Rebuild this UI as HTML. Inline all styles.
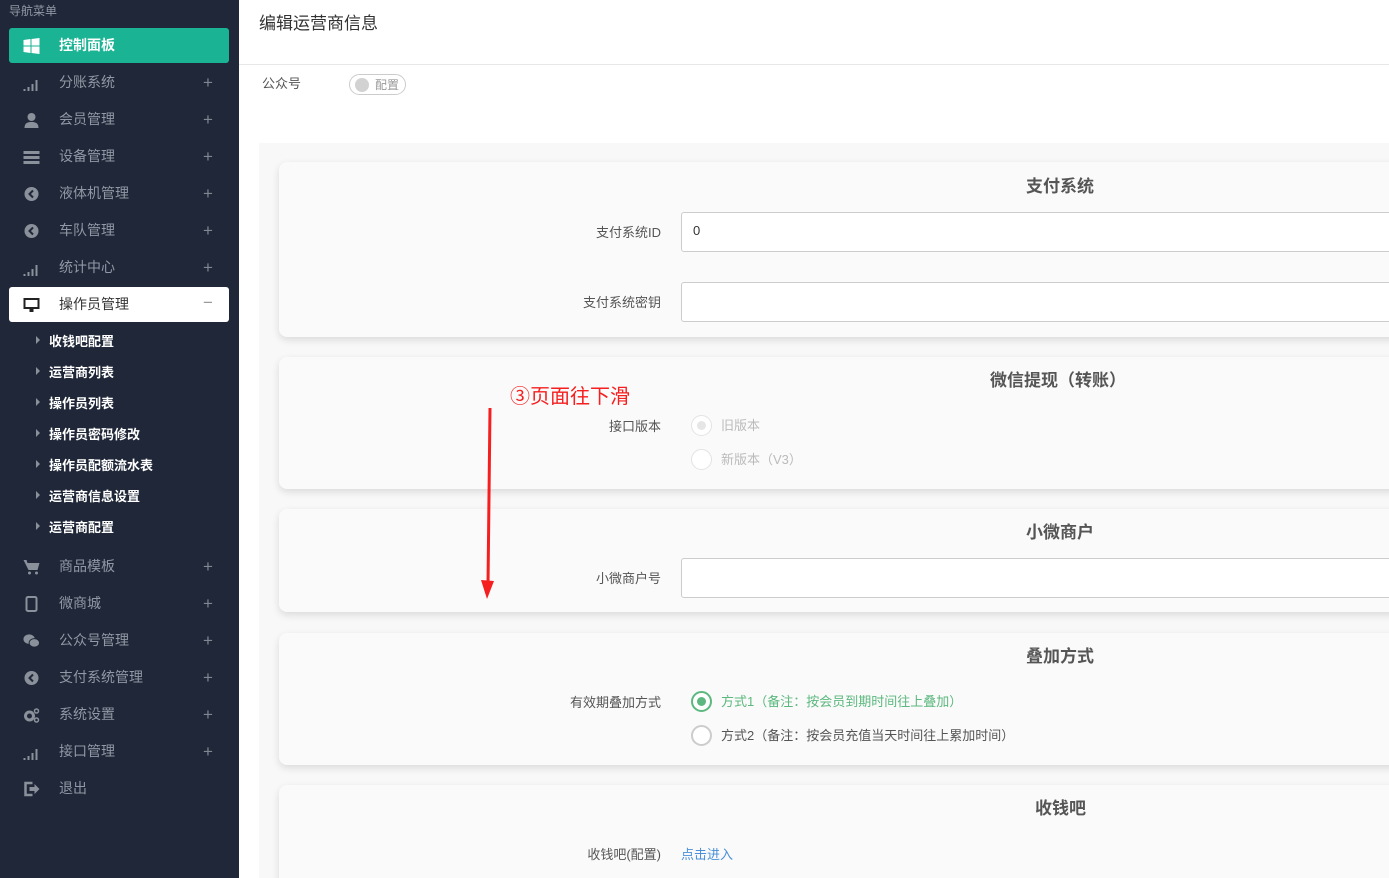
<!DOCTYPE html>
<html><head><meta charset="utf-8"><style>
*{margin:0;padding:0;box-sizing:border-box}
html,body{width:1389px;height:878px;overflow:hidden}
body{position:relative;background:#fff;font-family:"Liberation Sans","Noto Sans CJK SC",sans-serif;font-size:13px;color:#555}
.sb{position:absolute;left:0;top:0;width:239px;height:878px;background:#1f2738}
.abs{position:absolute}
.nav{position:absolute;left:9px;width:220px;height:36px;color:#9099a5;font-size:14px}
.nav .t{position:absolute;left:50px;top:7px}
.nav .p{position:absolute;left:194px;top:8px;font-size:17px;color:#7f8792}
.nav .ic{position:absolute;left:14px;top:10px;width:17px;height:16px}
.sub{position:absolute;left:49px;color:#fff;font-size:13px;font-weight:bold}
.sub:before{content:"";position:absolute;left:-13px;top:5px;border-left:4px solid #8a919b;border-top:4px solid transparent;border-bottom:4px solid transparent}
.card{position:absolute;left:279px;width:1600px;background:#fafafa;border-radius:8px;box-shadow:0 3px 8px rgba(0,0,0,.12)}
.ttl{position:absolute;left:1026px;font-size:17px;font-weight:bold;color:#555}
.lbl{position:absolute;width:200px;left:461px;text-align:right;font-size:13px;color:#555}
.inp{position:absolute;left:681px;width:720px;height:40px;background:#fff;border:1px solid #ccc;border-radius:3px}
.rad{position:absolute;left:691px;width:21px;height:21px;border-radius:50%;border:1px solid #ccc;background:#fff}
</style></head><body>
<div class="sb">
<div class="abs" style="left:9px;top:2px;color:#9099a5;font-size:12px">导航菜单</div>
<div class="nav" style="top:28px;height:35px;background:#1ab394;border-radius:3px;color:#fff;font-weight:bold"><svg class="ic" viewBox="0 0 16 16"><path d="M0 2l7-1v6.5H0zM8 1l8-1v7.5H8zM0 8.5h7V15L0 14zM8 8.5h8V16l-8-1z" fill="#fff"/></svg><span class="t" style="top:7px">控制面板</span></div>
<div class="nav" style="top:65px"><svg class="ic" viewBox="0 0 16 16"><path d="M0 14h2v2H0zM4 12h2v4H4zM8 9h2v7H8zM12 5h2v11h-2z" fill="#8a919b"/></svg><span class="t">分账系统</span><span class="p">+</span></div>
<div class="nav" style="top:102px"><svg class="ic" viewBox="0 0 16 16"><circle cx="8" cy="5" r="4" fill="#8a919b"/><path d="M1 16c0-5 3-6 7-6s7 1 7 6z" fill="#8a919b"/></svg><span class="t">会员管理</span><span class="p">+</span></div>
<div class="nav" style="top:139px"><svg class="ic" viewBox="0 0 16 16"><path d="M0 2h16v3H0zM0 7h16v3H0zM0 12h16v3H0z" fill="#8a919b"/></svg><span class="t">设备管理</span><span class="p">+</span></div>
<div class="nav" style="top:176px"><svg class="ic" viewBox="0 0 16 16"><circle cx="8" cy="8" r="7" fill="#8a919b"/><path d="M9.5 4.5L6 8l3.5 3.5" stroke="#1f2738" stroke-width="2" fill="none"/></svg><span class="t">液体机管理</span><span class="p">+</span></div>
<div class="nav" style="top:213px"><svg class="ic" viewBox="0 0 16 16"><circle cx="8" cy="8" r="7" fill="#8a919b"/><path d="M9.5 4.5L6 8l3.5 3.5" stroke="#1f2738" stroke-width="2" fill="none"/></svg><span class="t">车队管理</span><span class="p">+</span></div>
<div class="nav" style="top:250px"><svg class="ic" viewBox="0 0 16 16"><path d="M0 14h2v2H0zM4 12h2v4H4zM8 9h2v7H8zM12 5h2v11h-2z" fill="#8a919b"/></svg><span class="t">统计中心</span><span class="p">+</span></div>
<div class="nav" style="top:287px;height:35px;background:#fff;border-radius:3px;color:#333"><svg class="ic" viewBox="0 0 16 16"><path d="M0 1h16v11H0z" fill="#222"/><path d="M2 3h12v7H2z" fill="#fff"/><path d="M6 12h4v3H6z" fill="#222"/></svg><span class="t" style="top:7px">操作员管理</span><span class="p" style="top:6px;color:#999">−</span></div>
<div class="sub" style="top:331px">收钱吧配置</div>
<div class="sub" style="top:362px">运营商列表</div>
<div class="sub" style="top:393px">操作员列表</div>
<div class="sub" style="top:424px">操作员密码修改</div>
<div class="sub" style="top:455px">操作员配额流水表</div>
<div class="sub" style="top:486px">运营商信息设置</div>
<div class="sub" style="top:517px">运营商配置</div>
<div class="nav" style="top:549px"><svg class="ic" viewBox="0 0 16 16"><path d="M0 1h3l1 3h12l-2 7H5z" fill="#8a919b"/><circle cx="6" cy="14" r="1.5" fill="#8a919b"/><circle cx="13" cy="14" r="1.5" fill="#8a919b"/></svg><span class="t">商品模板</span><span class="p">+</span></div>
<div class="nav" style="top:586px"><svg class="ic" viewBox="0 0 16 16"><rect x="3" y="1" width="10" height="14" rx="1.5" fill="none" stroke="#8a919b" stroke-width="2"/></svg><span class="t">微商城</span><span class="p">+</span></div>
<div class="nav" style="top:623px"><svg class="ic" viewBox="0 0 18 16"><ellipse cx="6.5" cy="6" rx="6" ry="5" fill="#8a919b"/><ellipse cx="12" cy="10" rx="5.5" ry="4.5" fill="#8a919b" stroke="#1f2738"/></svg><span class="t">公众号管理</span><span class="p">+</span></div>
<div class="nav" style="top:660px"><svg class="ic" viewBox="0 0 16 16"><circle cx="8" cy="8" r="7" fill="#8a919b"/><path d="M9.5 4.5L6 8l3.5 3.5" stroke="#1f2738" stroke-width="2" fill="none"/></svg><span class="t">支付系统管理</span><span class="p">+</span></div>
<div class="nav" style="top:697px"><svg class="ic" viewBox="0 0 16 16"><circle cx="6" cy="9" r="4" fill="none" stroke="#8a919b" stroke-width="3"/><circle cx="13" cy="4" r="2" fill="none" stroke="#8a919b" stroke-width="1.5"/><circle cx="13" cy="13" r="2" fill="none" stroke="#8a919b" stroke-width="1.5"/></svg><span class="t">系统设置</span><span class="p">+</span></div>
<div class="nav" style="top:734px"><svg class="ic" viewBox="0 0 16 16"><path d="M0 14h2v2H0zM4 12h2v4H4zM8 9h2v7H8zM12 5h2v11h-2z" fill="#8a919b"/></svg><span class="t">接口管理</span><span class="p">+</span></div>
<div class="nav" style="top:771px"><svg class="ic" viewBox="0 0 16 16"><path d="M9 2H2v12h7" fill="none" stroke="#8a919b" stroke-width="2.5"/><path d="M6 6h5V3l5 5-5 5v-3H6z" fill="#8a919b"/></svg><span class="t">退出</span></div>
</div>

<div class="abs" style="left:259px;top:9px;font-size:17px;color:#333">编辑运营商信息</div>
<div class="abs" style="left:239px;top:64px;width:1150px;height:1px;background:#e7e7e7"></div>
<div class="abs" style="left:262px;top:73px;font-size:13px;color:#555">公众号</div>
<div class="abs" style="left:349px;top:74px;width:57px;height:21px;border:1px solid #ccc;border-radius:11px;background:#fff"><div class="abs" style="left:5px;top:3px;width:14px;height:14px;border-radius:50%;background:#d2d2d2"></div><span class="abs" style="left:25px;top:1px;font-size:12px;color:#999">配置</span></div>
<div class="abs" style="left:259px;top:143px;width:1130px;height:735px;background:#f8f8f8"></div>

<div class="card" style="top:162px;height:175px"></div>
<div class="ttl" style="top:172px">支付系统</div>
<div class="lbl" style="top:222px">支付系统ID</div>
<div class="inp" style="top:212px"><span class="abs" style="left:11px;top:10px;color:#333">0</span></div>
<div class="lbl" style="top:292px">支付系统密钥</div>
<div class="inp" style="top:282px"></div>

<div class="card" style="top:357px;height:132px"></div>
<div class="ttl" style="top:366px;left:990px">微信提现（转账）</div>
<div class="lbl" style="top:416px">接口版本</div>
<div class="rad" style="top:415px;border-color:#e3e3e3"><div class="abs" style="left:5px;top:5px;width:9px;height:9px;border-radius:50%;background:#e6e6e6"></div></div>
<div class="abs" style="left:721px;top:415px;color:#bbb">旧版本</div>
<div class="rad" style="top:449px;border-color:#e3e3e3"></div>
<div class="abs" style="left:721px;top:449px;color:#bbb">新版本（V3）</div>

<div class="card" style="top:509px;height:103px"></div>
<div class="ttl" style="top:518px">小微商户</div>
<div class="lbl" style="top:568px">小微商户号</div>
<div class="inp" style="top:558px"></div>

<div class="card" style="top:633px;height:132px"></div>
<div class="ttl" style="top:642px">叠加方式</div>
<div class="lbl" style="top:692px">有效期叠加方式</div>
<div class="rad" style="top:691px;border:2px solid #5cb87f"><div class="abs" style="left:4px;top:4px;width:9px;height:9px;border-radius:50%;background:#5cb87f"></div></div>
<div class="abs" style="left:721px;top:691px;color:#5cb87f">方式1（备注：按会员到期时间往上叠加）</div>
<div class="rad" style="top:725px;border:2px solid #ccc"></div>
<div class="abs" style="left:721px;top:725px;color:#555">方式2（备注：按会员充值当天时间往上累加时间）</div>

<div class="card" style="top:785px;height:120px"></div>
<div class="ttl" style="top:794px;left:1035px">收钱吧</div>
<div class="lbl" style="top:844px">收钱吧(配置)</div>
<div class="abs" style="left:681px;top:844px;color:#4a90d9">点击进入</div>

<div class="abs" style="left:510px;top:380px;color:#f51f1f;font-size:20px">③页面往下滑</div>
<svg class="abs" style="left:476px;top:405px" width="24" height="196"><path d="M14 3L12 180" stroke="#f51f1f" stroke-width="3"/><path d="M5 175L11 194L18 176z" fill="#f51f1f"/></svg>
</body></html>
